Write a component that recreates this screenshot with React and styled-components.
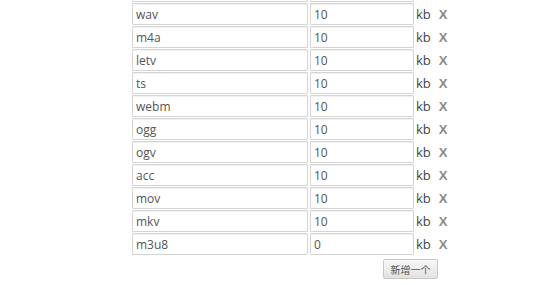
import React from "react";
import styled, { createGlobalStyle } from "styled-components";

const Global = createGlobalStyle`
  html, body { margin: 0; padding: 0; background: #fff; overflow: hidden; }
  body { font-family: "Open Sans", "Noto Sans CJK SC", sans-serif; }
`;

const List = styled.div`
  margin-top: -20px;
  padding-left: 132px;
  display: flex;
  flex-direction: column;
  gap: 1px;
`;

const Row = styled.div`
  display: flex;
  align-items: center;
  height: 22px;
`;

const Field = styled.input`
  box-sizing: border-box;
  width: ${(p) => p.$w}px;
  height: 22px;
  margin: 0 ${(p) => p.$mr || 0}px 0 0;
  padding: 0 0 0 3px;
  border: 1px solid #d4d4d4;
  border-radius: 1px;
  box-shadow: inset 0 1px 1px rgba(0, 0, 0, 0.06);
  font-family: "Open Sans", "Noto Sans CJK SC", sans-serif;
  font-size: 12px;
  color: #555;
  background: #fff;
  outline: none;
`;

const Unit = styled.span`
  margin-left: 2px;
  font-size: 13px;
  color: #444;
`;

const Remove = styled.span`
  margin-left: 8px;
  font-family: "Liberation Sans", Arial, sans-serif;
  font-weight: bold;
  font-size: 13px;
  color: #8a8a8a;
  cursor: pointer;
`;

const Footer = styled.div`
  display: flex;
  padding-left: 383px;
  margin-top: 4px;
`;

const AddButton = styled.button`
  box-sizing: border-box;
  width: 55px;
  height: 20px;
  padding: 0;
  border: 1px solid #c8c8c8;
  border-radius: 2px;
  background: linear-gradient(#f8f8f8, #e2e2e2);
  font-family: "Noto Sans CJK SC", sans-serif;
  font-size: 10px;
  color: #555;
`;

const rows = [
  ["wav", "10"],
  ["m4a", "10"],
  ["letv", "10"],
  ["ts", "10"],
  ["webm", "10"],
  ["ogg", "10"],
  ["ogv", "10"],
  ["acc", "10"],
  ["mov", "10"],
  ["mkv", "10"],
  ["m3u8", "0"],
];

export default function App() {
  return (
    <>
      <Global />
      <List>
        <Row>
          <Field $w={176} $mr={2} defaultValue="" />
          <Field $w={104} defaultValue="" />
        </Row>
        {rows.map(([ext, size], i) => (
          <Row key={i}>
            <Field $w={176} $mr={2} defaultValue={ext} />
            <Field $w={104} defaultValue={size} />
            <Unit>kb</Unit>
            <Remove>X</Remove>
          </Row>
        ))}
      </List>
      <Footer>
        <AddButton>新增一个</AddButton>
      </Footer>
    </>
  );
}
